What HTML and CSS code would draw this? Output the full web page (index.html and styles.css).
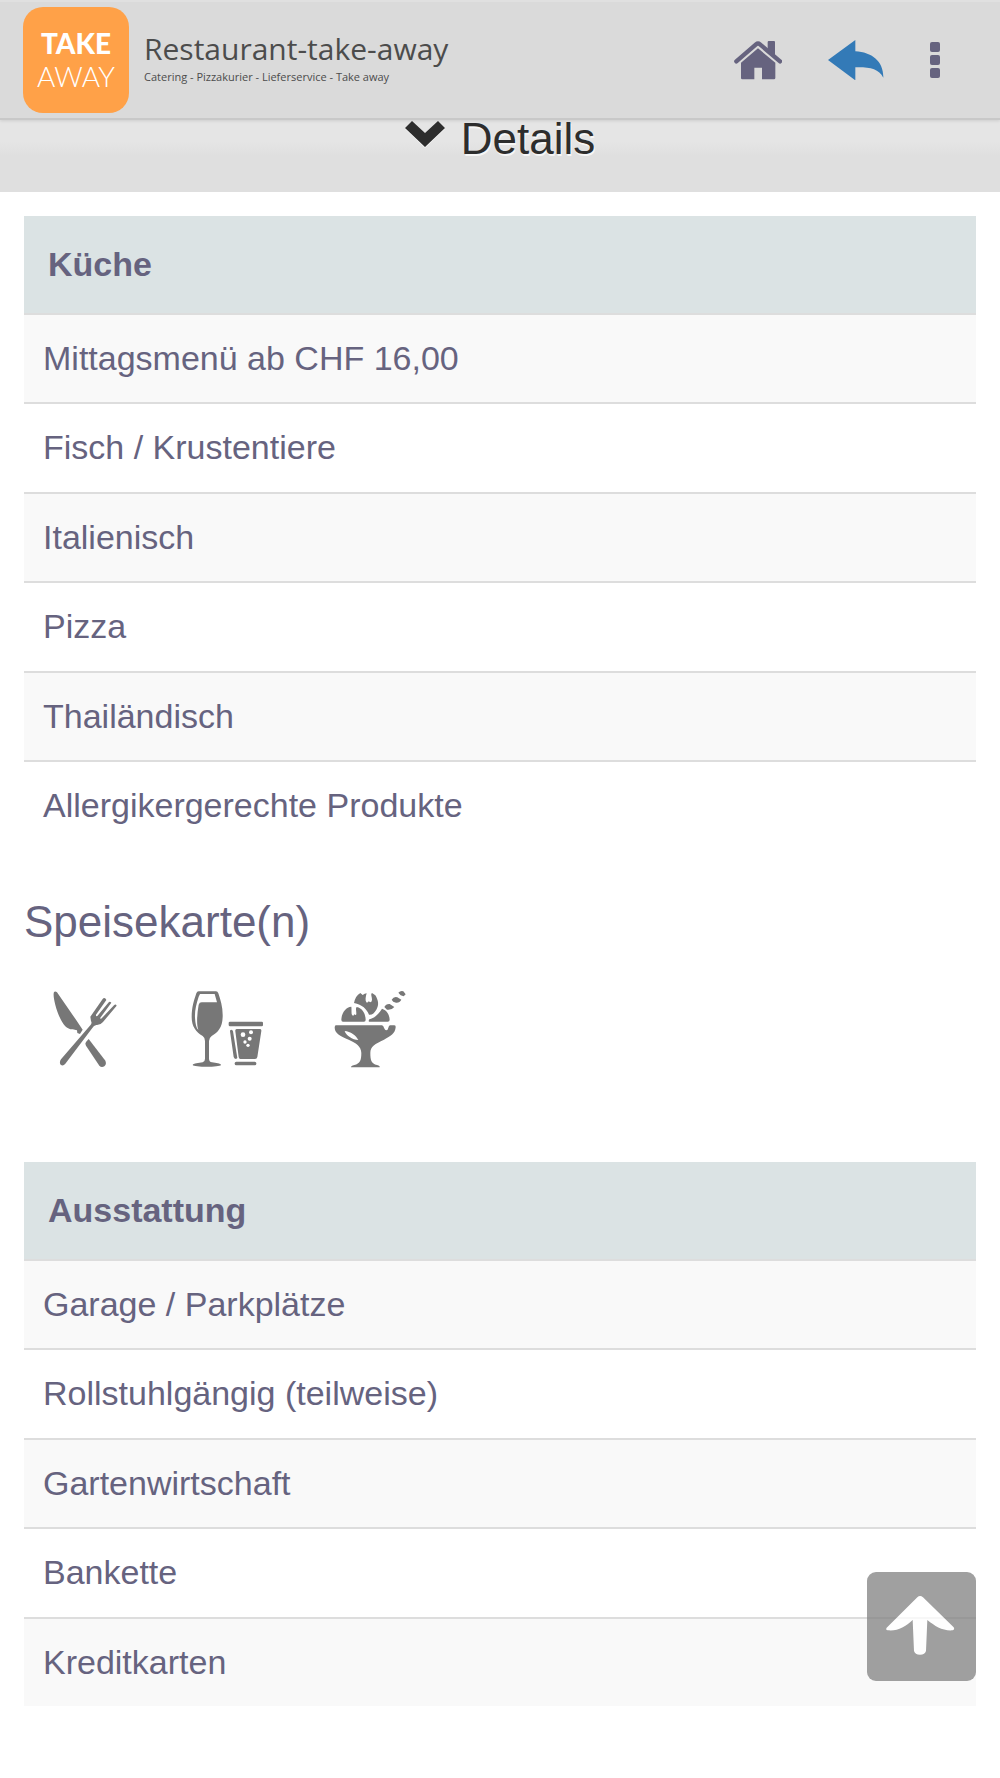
FILE: index.html
```html
<!DOCTYPE html>
<html lang="de">
<head>
  <meta charset="UTF-8">
  <meta name="viewport" content="width=device-width, initial-scale=1.0">
  <title>Restaurant-take-away</title>
  <link rel="stylesheet" href="styles.css">
</head>
<body>

  <header class="header">
    <a class="brand" href="#">
      <span class="logo">
        <span class="logo-take">TAKE</span>
        <span class="logo-away">AWAY</span>
      </span>
      <span class="brand-text">
        <span class="brand-name">Restaurant-take-away</span>
        <span class="brand-sub">Catering - Pizzakurier - Lieferservice - Take away</span>
      </span>
    </a>
    <nav class="nav">
      <a class="nav-link" href="#" aria-label="Home">
        <svg width="48" height="40" viewBox="102 122 144 120">
          <path d="M123 190 L174 147 L226 190 V236 Q226 240 222 240 H186 V205 H163 V240 H127 Q123 240 123 236 Z"/>
          <path d="M109 186 L168 135 Q174 130 180 135 L240 186" fill="none" stroke="#66637f" stroke-width="13" stroke-linecap="round" stroke-linejoin="round"/>
          <path d="M203 128 Q203 125 206 125 H222 Q225 125 225 128 V171 L203 152 Z"/>
        </svg>
      </a>
      <a class="nav-link nav-back" href="#" aria-label="Zurück">
        <svg width="56" height="40" viewBox="383 121 168 120">
          <path d="M383 181 L465 121 V155 C515 158 550 185 549 234 C535 207 508 202 465 203 V242 Z"/>
        </svg>
      </a>
      <button class="menu-button" type="button" aria-label="Menü">
        <svg width="10" height="36" viewBox="0 0 10 36">
          <rect x="0" y="0" width="10" height="10" rx="2"/>
          <rect x="0" y="13" width="10" height="10" rx="2"/>
          <rect x="0" y="26" width="10" height="10" rx="2"/>
        </svg>
      </button>
    </nav>
  </header>

  <button class="details" type="button">
    <svg class="chevron" width="40" height="28" viewBox="0 0 40 28">
      <path d="M0 7 L7 0 L20 12 L33 0 L40 7 L20 26 Z"/>
    </svg>
    <span>Details</span>
  </button>

  <main class="content">
    <table class="list">
      <thead>
        <tr><th>Küche</th></tr>
      </thead>
      <tbody>
        <tr><td>Mittagsmenü ab CHF 16,00</td></tr>
        <tr><td>Fisch / Krustentiere</td></tr>
        <tr><td>Italienisch</td></tr>
        <tr><td>Pizza</td></tr>
        <tr><td>Thailändisch</td></tr>
        <tr><td>Allergikergerechte Produkte</td></tr>
      </tbody>
    </table>

    <h2 class="title">Speisekarte(n)</h2>
    <div class="menus">
      <a href="#" aria-label="Speisen">
        <svg width="80" height="80" viewBox="45 60 240 240">
          <path d="M72 66 Q76 62 81 67 L137 148 L158 179 L150 192 L142 189 L141 181 C132 177 126 181 113 174 C98 166 84 135 76 105 C72 88 69 73 72 66 Z"/>
          <path d="M176 207 L225 271 Q231 281 224 288 Q215 294 208 287 L168 227 Q164 221 168 216 Z"/>
          <path d="M181 140 L218 87 Q222 81 227 86 L229 90 L198 134 Q197 140 202 138 L235 98 Q239 93 244 98 L211 143 Q210 149 215 145 L252 106 Q257 101 260 107 L219 156 Q211 166 199 165 Q191 166 187 174 L106 281 Q99 290 92 284 Q87 277 93 268 L181 166 Q187 160 183 153 Z"/>
        </svg>
      </a>
      <a href="#" aria-label="Getränke">
        <svg width="80" height="80" viewBox="54 60 240 240">
          <path fill-rule="evenodd" d="M86 64 H138 Q143 64 145 70 C152 92 159 113 158 141 C157 173 144 187 125 198 Q118 203 117 213 V266 Q117 275 126 277 C138 279 152 280 153 285 C149 292 72 292 68 285 C70 280 86 279 98 277 Q105 275 105 266 V213 Q105 203 98 198 C78 187 65 169 65 141 C65 112 72 91 79 70 Q81 64 86 64 Z M90 72 L86 80 C78 105 74 123 75 143 C76 161 79 174 85 180 C79 163 81 132 86 104 Q88 97 95 97 H141 L134 72 Z"/>
          <rect x="176" y="155" width="103" height="14" rx="4"/>
          <path d="M180 184 Q179 179 184 179 Q188 179 189 184 L202 264 L198 267 Q193 267 191 261 Z"/>
          <path d="M200 177 H269 Q275 177 274 183 L262 261 Q261 267 255 267 H211 Q207 267 206 261 L196 184 Q195 177 200 177 Z"/>
          <rect x="194" y="275" width="65" height="11" rx="5"/>
          <g fill="#fff">
            <circle cx="219" cy="194" r="7"/>
            <circle cx="243" cy="187" r="6"/>
            <circle cx="239" cy="206" r="6"/>
            <circle cx="225" cy="216" r="5"/>
            <circle cx="234" cy="226" r="5"/>
          </g>
        </svg>
      </a>
      <a href="#" aria-label="Desserts">
        <svg width="80" height="80" viewBox="63 60 240 240">
          <path fill-rule="evenodd" d="M78 166 H216 C223 168 222 181 229 181 C236 181 233 170 240 166 H253 Q258 166 257 172 C255 192 242 198 222 209 C195 222 181 228 181 249 C181 271 184 281 201 285 Q211 288 209 292 H123 Q122 288 133 285 C150 281 154 271 154 249 C154 228 137 219 116 209 C92 198 75 192 74 173 Q74 166 78 166 Z M104 183 C108 196 127 210 145 210 C139 197 121 184 104 183 Z"/>
          <path d="M99 155 Q94 155 94 149 C95 128 108 111 124 110 C125 115 124 120 125 132 Q126 137 130 137 L133 133 Q138 137 139 132 C139 120 136 116 140 111 C158 115 166 130 167 149 Q167 155 162 155 Z"/>
          <path d="M132 99 C134 86 141 75 151 69 L158 75 Q164 70 170 70 C167 79 165 91 169 97 Q173 99 176 94 L181 97 Q186 96 186 89 C186 78 181 74 186 69 L196 76 C205 91 208 105 199 119 C193 129 187 135 177 134 C170 117 157 104 132 99 Z"/>
          <path d="M178 155 Q174 154 178 148 C194 145 207 130 216 116 C232 122 238 134 239 149 Q239 155 233 155 Z"/>
          <path d="M223 111 Q228 101 239 102 L253 111 Q245 121 231 119 Z M245 89 Q251 79 262 82 L274 89 Q269 99 258 98 Q248 96 245 89 Z M265 68 Q272 61 280 64 L287 73 L281 79 L272 76 Z"/>
        </svg>
      </a>
    </div>

    <table class="list">
      <thead>
        <tr><th>Ausstattung</th></tr>
      </thead>
      <tbody>
        <tr><td>Garage / Parkplätze</td></tr>
        <tr><td>Rollstuhlgängig (teilweise)</td></tr>
        <tr><td>Gartenwirtschaft</td></tr>
        <tr><td>Bankette</td></tr>
        <tr><td>Kreditkarten</td></tr>
      </tbody>
    </table>
  </main>

  <button class="to-top" type="button" aria-label="Nach oben">
    <svg width="109" height="109" viewBox="81 97 327 327">
      <path d="M232 173 Q240 165 249 173 L341 263 Q345 270 338 272 C307 274 286 260 262 241 L258 334 Q255 345 240 345 Q225 345 222 334 L218 241 C196 262 173 275 143 272 Q136 270 140 264 Z"/>
    </svg>
  </button>

</body>
</html>
```

FILE: styles.css
```css
body {
  margin: 0;
  background-color: #fff;
  color: #66637f;
  font-family: Arial, "Liberation Sans", sans-serif;
  font-size: 34px;
}

button {
  border: none;
  padding: 0;
  margin: 0;
  font-family: inherit;
  cursor: pointer;
}

svg {
  display: block;
}

/* header */
.header {
  position: sticky;
  top: 0;
  z-index: 1;
  display: flex;
  justify-content: space-between;
  align-items: center;
  box-sizing: border-box;
  height: 120px;
  padding: 0 60px 0 23px;
  background-color: #dadada;
  border-top: 2px solid #e0e0e0;
  border-bottom: 2px solid #c8c8c8;
  box-shadow: 0 1px 3px rgba(0, 0, 0, 0.1);
}

.brand {
  display: flex;
  align-items: center;
  gap: 15px;
  color: #4c4c4c;
  text-decoration: none;
}

.logo {
  display: flex;
  flex-direction: column;
  align-items: center;
  justify-content: center;
  width: 106px;
  height: 106px;
  border-radius: 20px;
  background-color: #ffa148;
  color: #fff;
  font-family: Lato, sans-serif;
  font-size: 28px;
  line-height: 33px;
}

.logo-take {
  font-weight: 900;
}

.logo-away {
  font-weight: 300;
}

.brand-text {
  display: flex;
  flex-direction: column;
  font-family: "Open Sans", sans-serif;
}

.brand-name {
  font-size: 30px;
  line-height: 34px;
}

.brand-sub {
  font-size: 11px;
  line-height: 22px;
}

.nav {
  display: flex;
  align-items: center;
  gap: 46px;
}

.nav-link,
.menu-button {
  fill: #66637f;
}

.nav-back {
  fill: #337ab7;
}

.menu-button {
  background: none;
}

/* details bar */
.details {
  display: flex;
  justify-content: center;
  align-items: flex-start;
  gap: 16px;
  width: 100%;
  height: 72px;
  padding-top: 1px;
  background: linear-gradient(#e5e5e5 30%, #dfdfdf 50%);
  color: #2d2d2d;
  font-size: 44px;
  line-height: 36px;
  text-shadow: 1px 2px 0 #f6f6f6;
}

.chevron {
  fill: #2d2d2d;
  filter: drop-shadow(0 1px 0 #f6f6f6);
}

/* content */
.content {
  padding: 24px 24px 73px;
}

.list {
  width: 100%;
  border-collapse: separate;
  border-spacing: 0;
  line-height: 43px;
  text-align: left;
}

.list th {
  padding: 27px 24px;
  background-color: #dbe3e4;
}

.list td {
  padding: 22px 19px;
  border-top: 2px solid #ddd;
}

.list tr:nth-child(even) td {
  padding-bottom: 23px;
}

.list tbody tr:nth-child(odd) {
  background-color: #f9f9f9;
}

.title {
  margin: 48px 0 44px;
  font-size: 44px;
  font-weight: normal;
  line-height: 48px;
}

.menus {
  display: flex;
  gap: 63px;
  padding-left: 21px;
  margin-bottom: 92px;
  fill: #777;
}

/* back to top */
.to-top {
  position: fixed;
  right: 24px;
  bottom: 97px;
  border-radius: 9px;
  background-color: #808080;
  fill: #fff;
  opacity: 0.75;
}
```
